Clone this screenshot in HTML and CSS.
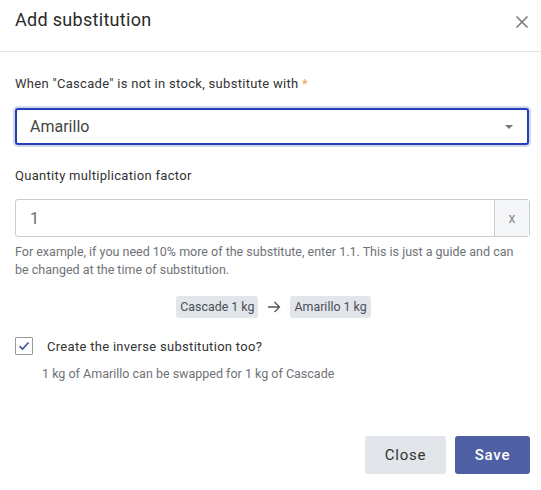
FILE: index.html
```html
<!DOCTYPE html>
<html>
<head>
<meta charset="utf-8">
<link rel="stylesheet" href="styles.css">
</head>
<body>
<div class="modal">
  <div class="modal-header">
    <h1 class="modal-title">Add substitution</h1>
    <button class="close-x" aria-label="Close">
      <svg width="14" height="14" viewBox="0 0 14 14"><path d="M1.5 1.5L12.5 12.5M12.5 1.5L1.5 12.5" stroke="#7a7a7a" stroke-width="1.6" fill="none"/></svg>
    </button>
  </div>
  <div class="modal-body">
    <div class="field field-select">
      <label class="label">When "Cascade" is not in stock, substitute with <span class="req">*</span></label>
      <div class="select">
        <span class="select-value">Amarillo</span>
        <span class="caret"></span>
      </div>
    </div>
    <div class="field field-qty">
      <label class="label">Quantity multiplication factor</label>
      <div class="input-group">
        <span class="input-value">1</span>
        <span class="addon">x</span>
      </div>
      <p class="help">For example, if you need 10% more of the substitute, enter 1.1. This is just a guide and can be changed at the time of substitution.</p>
    </div>
    <div class="chips">
      <span class="chip">Cascade 1 kg</span>
      <svg class="arrow" width="14" height="12" viewBox="0 0 14 12"><path d="M1 6H12.5M7.5 1L12.5 6L7.5 11" stroke="#555" stroke-width="1.3" fill="none"/></svg>
      <span class="chip">Amarillo 1 kg</span>
    </div>
    <div class="check-row">
      <span class="checkbox">
        <svg width="12" height="10" viewBox="0 0 12 10"><path d="M1.5 5.2L4.5 8L10.5 1.5" stroke="#3f4fa3" stroke-width="1.6" fill="none"/></svg>
      </span>
      <span class="check-label">Create the inverse substitution too?</span>
    </div>
    <p class="check-help">1 kg of Amarillo can be swapped for 1 kg of Cascade</p>
  </div>
  <div class="modal-footer">
    <button class="btn btn-light">Close</button>
    <button class="btn btn-primary">Save</button>
  </div>
</div>
</body>
</html>
```
FILE: styles.css
```css
* { box-sizing: border-box; }
html, body { margin: 0; padding: 0; background: #fff; }
body { font-family: Roboto, "Noto Sans", sans-serif; color: #333; }
.modal { width: 541px; height: 490px; display: flex; flex-direction: column; }
.modal-header {
  height: 52px;
  border-bottom: 1px solid #e3e3e3;
  display: flex; align-items: flex-start; justify-content: space-between;
  padding: 9px 12px 0 15px;
}
.modal-title { margin: 0; font-size: 18px; font-weight: 400; color: #2a2a2a; letter-spacing: 0.3px; line-height: 22px; }
.close-x { border: 0; background: none; padding: 0; margin-top: 6px; width: 14px; height: 14px; display: flex; }
.modal-body { padding: 0 12px 0 15px; flex: 1; }
.label { display: block; font-size: 13px; color: #333; letter-spacing: 0.3px; line-height: 16px; }
.field-select { padding-top: 24px; }
.req { color: #f0a04b; }
.select {
  margin-top: 16px;
  height: 37px;
  border: 2px solid #2340b8;
  border-radius: 3px;
  box-shadow: 0 0 0 2px #d2d8ec;
  display: flex; align-items: center; justify-content: space-between;
  padding: 0 12px 0 13px;
  width: 514px;
}
.select-value { font-size: 16px; color: #444; }
.caret { width: 0; height: 0; border-left: 4px solid transparent; border-right: 4px solid transparent; border-top: 4px solid #777; margin-right: 2px; }
.field-qty { padding-top: 23px; }
.input-group {
  margin-top: 15px;
  height: 38px; width: 515px;
  border: 1px solid #ccc; border-radius: 3px;
  display: flex; align-items: stretch;
}
.input-value { flex: 1; font-size: 16px; color: #666a75; padding-left: 14px; display: flex; align-items: center; }
.addon { width: 35px; border-left: 1px solid #ccc; background: #f5f6f8; color: #888; font-size: 14px; display: flex; align-items: center; justify-content: center; }
.help { margin: 6px 0 0; font-size: 12.5px; line-height: 18px; color: #6f7277; }
.chips { display: flex; justify-content: center; align-items: center; gap: 9px; margin-top: 17px; margin-left: 3px; }
.chip { background: #e2e5ea; color: #4a4f57; font-size: 12.4px; padding: 3px 4px; border-radius: 3px; line-height: 16px; }
.check-row { display: flex; align-items: center; margin-top: 19px; }
.checkbox { width: 18px; height: 18px; border: 1px solid #9a9a9a; display: flex; align-items: center; justify-content: center; border-radius: 1px; }
.check-label { font-size: 13px; margin-left: 14px; color: #333; letter-spacing: 0.3px; }
.check-help { margin: 11px 0 0 27px; font-size: 12.5px; color: #6f7277; }
.modal-footer { display: flex; justify-content: flex-end; gap: 9px; padding: 0 11px 16px 0; }
.btn { height: 38px; border: 0; border-radius: 3px; font-family: Roboto, sans-serif; font-size: 15px; letter-spacing: 0.8px; padding: 0; }
.btn-light { width: 81px; background: #e2e5ea; color: #333; }
.btn-primary { width: 75px; background: #4f5fa3; color: #fff; font-weight: 500; }
```
